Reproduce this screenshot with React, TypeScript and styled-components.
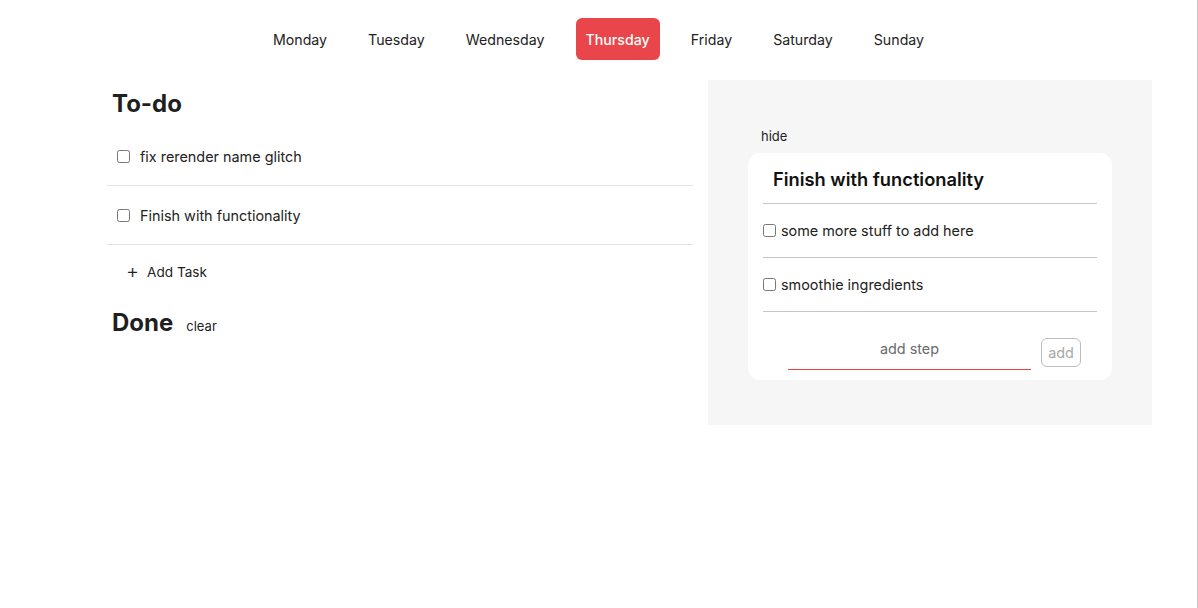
import React from "react";
import styled, { createGlobalStyle } from "styled-components";

const Global = createGlobalStyle`
  html, body { margin: 0; padding: 0; background: #fff; }
  body { font-family: Inter, "Noto Sans", "Liberation Sans", sans-serif; color: #1f1f1f; }
  * { box-sizing: border-box; }
`;

const Page = styled.div`
  width: 1198px;
  min-height: 608px;
  border-right: 1px solid #c4c4c4;
  padding-top: 18px;
`;

const Nav = styled.nav`
  display: flex;
  justify-content: center;
  gap: 21px;
`;

const DayButton = styled.button<{ $active?: boolean }>`
  font-family: inherit;
  font-size: 14.2px;
  height: 42px;
  padding: 0 10px;
  border: none;
  border-radius: 6px;
  background: ${(p) => (p.$active ? "#e8464a" : "transparent")};
  color: ${(p) => (p.$active ? "#fff" : "#222")};
  font-weight: ${(p) => (p.$active ? 500 : 400)};
  cursor: pointer;
`;

const Main = styled.main`
  display: flex;
  align-items: flex-start;
  gap: 15px;
  margin-top: 20px;
  padding-left: 107px;
`;

const LeftColumn = styled.section`
  width: 586px;
  padding-top: 9px;
`;

const Heading = styled.h2`
  margin: 0;
  font-size: 24px;
  line-height: 30px;
  font-weight: 700;
  padding-left: 5px;
  color: #1f1f1f;
  display: flex;
  align-items: baseline;
  gap: 13px;
`;

const TodoList = styled.ul`
  list-style: none;
  margin: 8px 0 0;
  padding: 0;
`;

const TodoRow = styled.li`
  display: flex;
  align-items: center;
  height: 59px;
  padding-left: 10px;
  border-bottom: 1px solid #e3e3e3;
  font-size: 14.4px;
  color: #222;
  gap: 10px;
`;

const Check = styled.input.attrs({ type: "checkbox" })`
  width: 13px;
  height: 13px;
  margin: 0;
`;

const AddRow = styled.div`
  display: flex;
  align-items: center;
  height: 54px;
  padding-left: 19px;
  gap: 8px;
  font-size: 13.6px;
  color: #222;
`;

const Plus = styled.span`
  font-size: 20px;
  font-weight: 300;
  line-height: 1;
  margin-top: -3px;
`;

const SmallLink = styled.span`
  font-size: 13px;
  font-weight: 400;
  color: #222;
`;

const DoneHeading = styled(Heading)`
  margin-top: 9px;
`;

const Panel = styled.aside`
  width: 444px;
  background: #f6f6f6;
  padding: 48px 40px 45px;
`;

const HideLink = styled.div`
  font-size: 13px;
  line-height: 17px;
  color: #222;
  margin: 0 0 8px 13px;
`;

const Card = styled.div`
  background: #fff;
  border-radius: 12px;
  padding: 14px 15px 10px;
`;

const CardTitle = styled.h3`
  margin: 0;
  font-size: 18.3px;
  line-height: 24px;
  font-weight: 600;
  padding: 0 0 12px 10px;
  border-bottom: 1px solid #c6c6c6;
  color: #111;
`;

const StepRow = styled.div`
  display: flex;
  align-items: center;
  height: 54px;
  gap: 5px;
  border-bottom: 1px solid #c6c6c6;
  font-size: 14.4px;
  color: #222;
`;

const AddStepRow = styled.form`
  display: flex;
  align-items: flex-end;
  gap: 10px;
  padding: 17px 16px 0 25px;
`;

const StepInput = styled.input`
  width: 243px;
  height: 41px;
  border: none;
  border-bottom: 1px solid #ec4145;
  outline: none;
  text-align: center;
  font-family: inherit;
  font-size: 14.4px;
  color: #222;
  background: transparent;
  padding: 0 0 2px;
  &::placeholder { color: #6a6a6a; }
`;

const AddButton = styled.button`
  width: 40px;
  height: 29px;
  margin-bottom: 3px;
  border: 1px solid #bdbdbd;
  border-radius: 6px;
  background: #fff;
  color: #a8a8a8;
  font-family: inherit;
  font-size: 14.4px;
  padding: 0;
`;

const days = ["Monday", "Tuesday", "Wednesday", "Thursday", "Friday", "Saturday", "Sunday"];

export default function App() {
  return (
    <Page>
      <Global />
      <Nav>
        {days.map((d) => (
          <DayButton key={d} $active={d === "Thursday"}>
            {d}
          </DayButton>
        ))}
      </Nav>
      <Main>
        <LeftColumn>
          <Heading>To-do</Heading>
          <TodoList>
            <TodoRow>
              <Check />
              <span>fix rerender name glitch</span>
            </TodoRow>
            <TodoRow>
              <Check />
              <span>Finish with functionality</span>
            </TodoRow>
          </TodoList>
          <AddRow>
            <Plus>+</Plus>
            <span>Add Task</span>
          </AddRow>
          <DoneHeading>
            Done <SmallLink>clear</SmallLink>
          </DoneHeading>
        </LeftColumn>
        <Panel>
          <HideLink>hide</HideLink>
          <Card>
            <CardTitle>Finish with functionality</CardTitle>
            <StepRow>
              <Check />
              <span>some more stuff to add here</span>
            </StepRow>
            <StepRow>
              <Check />
              <span>smoothie ingredients</span>
            </StepRow>
            <AddStepRow onSubmit={(e) => e.preventDefault()}>
              <StepInput placeholder="add step" />
              <AddButton type="submit">add</AddButton>
            </AddStepRow>
          </Card>
        </Panel>
      </Main>
    </Page>
  );
}
